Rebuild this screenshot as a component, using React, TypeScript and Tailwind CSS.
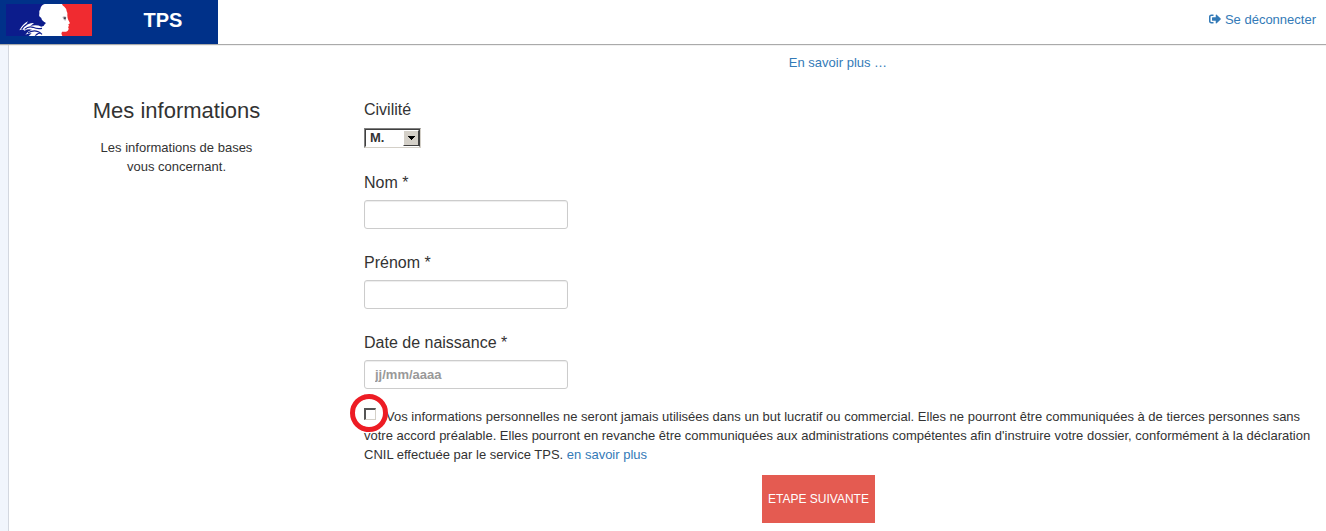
import React from "react";
import { FaSignOutAlt } from "react-icons/fa";

function Marianne() {
  return (
    <svg viewBox="0 0 258 96" className="h-8 w-[86px] shrink-0" role="img" aria-label="République française">
      <rect width="258" height="96" fill="#0c1c8c" />
      <rect x="140" width="118" height="96" fill="#f02b30" />
      <path
        d="M116 0 L168 0 Q169 5 175 8 Q183 15 182 22 Q186 28 184 34 Q184 42 187 48 L192 58 L187 61 L189 66 L186 69 L188 73 Q188 82 180 83 L168 83 Q164 88 169 96 L88 96 L103 84 Q112 76 112 68 Q115 61 120 57 Q106 49 106 42 Q97 37 100 30 Q97 22 103 16 Q104 4 116 0 Z"
        fill="#fff"
      />
      <path
        d="M40 79 Q50 60 66 52 Q61 61 56 68 Q68 56 84 57 L73 66 Q92 61 106 68 L118 64 L120 96 L106 96 Q101 90 92 89 L86 96 L68 96 L77 88 Q67 88 58 92 Q66 80 78 77 Q66 73 56 80 Q49 74 40 79 Z"
        fill="#fff"
      />
      <path
        d="M47 76 Q53 67 62 61 M56 76 Q67 66 81 70 Q94 76 108 73 M66 86 Q82 78 94 82 Q102 84 108 91 M90 93 Q96 87 104 87"
        fill="none"
        stroke="#0c1c8c"
        strokeWidth="3.5"
      />
      <path d="M169 39 Q175 35 181 39 L179 50 Q174 50 172 45 Z" fill="#b9b9c0" />
      <path d="M173 40 L180 40 L179 46 L174 45 Z" fill="#44444c" />
    </svg>
  );
}

function Field({ id, label, placeholder }: { id: string; label: string; placeholder?: string }) {
  return (
    <div className="mb-6">
      <label htmlFor={id} className="mb-[7px] block text-base leading-5">
        {label} *
      </label>
      <input
        id={id}
        type="text"
        placeholder={placeholder}
        className="block h-[29px] w-[204px] rounded-[3px] border border-[#ccc] bg-white px-2.5 text-[13px] font-bold shadow-[inset_0_1px_1px_rgba(0,0,0,0.075)] placeholder:text-[#999]"
      />
    </div>
  );
}

export default function App() {
  return (
    <div className="flex min-h-screen flex-col bg-white font-['Liberation_Sans',Arial,sans-serif] text-[13px] leading-[19px] text-[#333]">
      <header className="relative flex h-11 items-stretch justify-between shadow-[0_1px_1px_#aaa]">
        <div className="flex w-[218px] items-start bg-[#003189] pl-1.5 pt-1">
          <Marianne />
          <span className="flex-1 pr-3 pl-7 text-center text-xl leading-8 font-bold text-white">TPS</span>
        </div>
        <a href="#deconnexion" className="flex items-center gap-1 pr-2.5 pb-1.5 text-[#337ab7]">
          <FaSignOutAlt className="size-3" aria-hidden="true" />
          Se déconnecter
        </a>
      </header>

      <main className="ml-2 flex grow border-l border-[#d3d7df] shadow-[-8px_0_0_#f1f5fc]">
        <aside className="w-[355px] shrink-0 pr-5 pt-[53px] text-center">
          <h1 className="mb-[13px] text-[22px] leading-7">Mes informations</h1>
          <p>
            Les informations de bases
            <br />
            vous concernant.
          </p>
        </aside>

        <section className="min-w-0 grow pr-5">
          <p className="pt-[9px] pl-1.5 text-center">
            <a href="#infos" className="text-[#337ab7]">
              En savoir plus …
            </a>
          </p>

          <form className="pt-7">
            <div className="mb-[25px]">
              <label htmlFor="civilite" className="mb-2 block text-base leading-5">
                Civilité
              </label>
              <div className="relative h-5 w-[57px] border border-t-[#808080] border-r-[#d4d0c8] border-b-[#d4d0c8] border-l-[#808080]">
                <select
                  id="civilite"
                  className="block h-full w-full appearance-none border border-t-[#404040] border-r-[#404040] border-b-white border-l-[#404040] bg-white pl-1 text-[13px] leading-4 font-bold"
                >
                  <option>M.</option>
                  <option>Mme</option>
                </select>
                <span className="pointer-events-none absolute inset-y-px right-px flex w-4 items-center justify-center border border-t-white border-r-[#404040] border-b-[#404040] border-l-white bg-[#d4d0c8]">
                  <svg viewBox="0 0 7 4" className="h-1 w-[7px]" shapeRendering="crispEdges" aria-hidden="true">
                    <path d="M0 0h7v1h-1v1h-1v1h-1v1h-1v-1h-1v-1h-1v-1h-1z" fill="#000" />
                  </svg>
                </span>
              </div>
            </div>

            <Field id="nom" label="Nom" />
            <Field id="prenom" label="Prénom" />
            <Field id="naissance" label="Date de naissance" placeholder="jj/mm/aaaa" />

            <div className="-mt-1.5 -mr-2">
              <span className="relative mr-2.5 inline-block size-3 align-[1px]">
                <input
                  id="accord"
                  type="checkbox"
                  className="block size-3 appearance-none border border-t-2 border-l-2 border-t-[#555] border-r-[#d4d0c8] border-b-[#d4d0c8] border-l-[#555] bg-white"
                />
                <svg viewBox="0 0 38 38" className="pointer-events-none absolute -top-3.5 -left-3.5 size-[38px] max-w-none" aria-hidden="true">
                  <circle cx="19" cy="19" r="16.5" fill="none" stroke="#ed1c24" strokeWidth="5" />
                </svg>
              </span>
              <label htmlFor="accord">
                Vos informations personnelles ne seront jamais utilisées dans un but lucratif ou commercial. Elles ne
                pourront être communiquées à de tierces personnes sans votre accord préalable. Elles pourront en revanche
                être communiquées aux administrations compétentes afin d'instruire votre dossier, conformément à la
                déclaration CNIL effectuée par le service TPS.
              </label>{" "}
              <a href="#cnil" className="text-[#337ab7]">
                en savoir plus
              </a>
            </div>

            <div className="mt-[11px] flex justify-center pr-[33px]">
              <button type="submit" className="h-12 w-[113px] bg-[#e45b51] text-xs text-white">
                ETAPE SUIVANTE
              </button>
            </div>
          </form>
        </section>
      </main>
    </div>
  );
}
